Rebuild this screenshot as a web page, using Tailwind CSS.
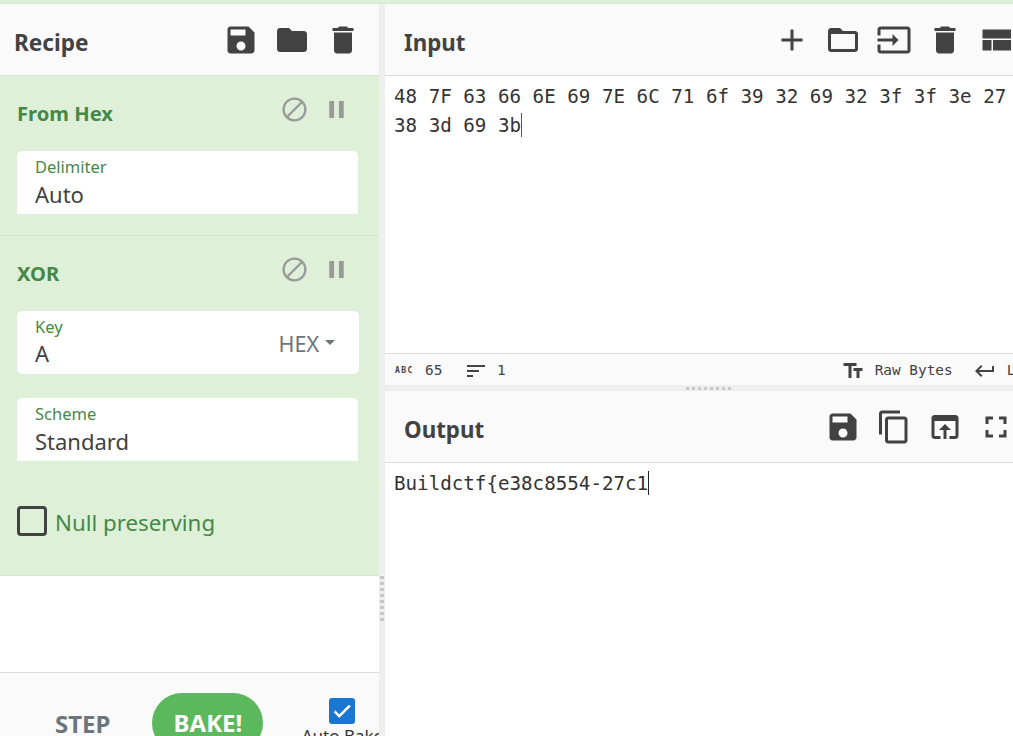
<!DOCTYPE html>
<html lang="en">
<head>
  <meta charset="UTF-8" />
  <title>CyberChef</title>
  <script src="https://cdn.jsdelivr.net/npm/@tailwindcss/browser@4"></script>
</head>
<body class="w-[1013px] h-[736px] overflow-hidden bg-white font-['Noto_Sans',sans-serif] text-[#424242]">

  <!-- top strip -->
  <div class="h-[4px] bg-[#dff0d8] border-b border-[#d8e6d2]"></div>

  <div class="flex h-[732px]">
    <!-- Recipe column -->
    <section class="w-[379px] flex-none flex flex-col overflow-hidden">
      <header class="h-[72px] flex-none flex items-center bg-[#fafafa] border-b border-[#dcdcdc] pl-[14px] pr-[11px]">
        <h2 class="text-[22.6px] font-bold leading-none mt-[8px]">Recipe</h2>
        <div class="ml-auto flex">
          <span class="w-[51px] h-[36px] flex justify-center"><svg class="w-[36px] h-[36px] fill-[#424242]" viewBox="0 0 24 24"><path d="M17 3H5c-1.11 0-2 .9-2 2v14c0 1.1.89 2 2 2h14c1.1 0 2-.9 2-2V7l-4-4zm-5 16c-1.66 0-3-1.34-3-3s1.34-3 3-3 3 1.34 3 3-1.34 3-3 3zm3-10H5V5h10v4z"/></svg></span>
          <span class="w-[51px] h-[36px] flex justify-center"><svg class="w-[36px] h-[36px] fill-[#424242]" viewBox="0 0 24 24"><path d="M10 4H4c-1.1 0-1.99.9-1.99 2L2 18c0 1.1.9 2 2 2h16c1.1 0 2-.9 2-2V8c0-1.1-.9-2-2-2h-8l-2-2z"/></svg></span>
          <span class="w-[51px] h-[36px] flex justify-center"><svg class="w-[36px] h-[36px] fill-[#424242]" viewBox="0 0 24 24"><path d="M6 19c0 1.1.9 2 2 2h8c1.1 0 2-.9 2-2V7H6v12zM19 4h-3.5l-1-1h-5l-1 1H5v2h14V4z"/></svg></span>
        </div>
      </header>

      <!-- From Hex -->
      <div class="h-[160px] flex-none bg-[#dff0d8] border-b border-[#d3e6cb] px-[17px] pt-[19px]">
        <div class="flex items-start h-[56px]">
          <h3 class="text-[20.2px] font-bold leading-none text-[#468847] mt-[8px]">From Hex</h3>
          <div class="ml-auto flex mr-[4px]">
            <svg class="w-[29px] h-[29px] fill-[#9a9a9a]" viewBox="0 0 24 24"><path d="M12 2C6.48 2 2 6.48 2 12s4.48 10 10 10 10-4.48 10-10S17.52 2 12 2zM4 12c0-4.42 3.58-8 8-8 1.85 0 3.55.63 4.9 1.69L5.69 16.9C4.63 15.55 4 13.85 4 12zm8 8c-1.85 0-3.55-.63-4.9-1.69L18.31 7.1C19.37 8.45 20 10.15 20 12c0 4.42-3.58 8-8 8z"/></svg>
            <svg class="w-[29px] h-[29px] fill-[#9a9a9a] ml-[13px] mr-[7px]" viewBox="0 0 24 24"><path d="M6 19h4V5H6v14zm8-14v14h4V5h-4z"/></svg>
          </div>
        </div>
        <div class="w-[341px] h-[63px] bg-white rounded-t-[5px] pl-[18px] pt-[5px]">
          <div class="text-[16.5px] leading-[22px] text-[#468847]">Delimiter</div>
          <div class="text-[22px] leading-[30px] mt-[1px]">Auto</div>
        </div>
      </div>

      <!-- XOR -->
      <div class="h-[340px] flex-none bg-[#dff0d8] border-b border-[#d3e6cb] px-[17px] pt-[19px]">
        <div class="flex items-start h-[56px]">
          <h3 class="text-[20.2px] font-bold leading-none text-[#468847] mt-[8px]">XOR</h3>
          <div class="ml-auto flex mr-[4px]">
            <svg class="w-[29px] h-[29px] fill-[#9a9a9a]" viewBox="0 0 24 24"><path d="M12 2C6.48 2 2 6.48 2 12s4.48 10 10 10 10-4.48 10-10S17.52 2 12 2zM4 12c0-4.42 3.58-8 8-8 1.85 0 3.55.63 4.9 1.69L5.69 16.9C4.63 15.55 4 13.85 4 12zm8 8c-1.85 0-3.55-.63-4.9-1.69L18.31 7.1C19.37 8.45 20 10.15 20 12c0 4.42-3.58 8-8 8z"/></svg>
            <svg class="w-[29px] h-[29px] fill-[#9a9a9a] ml-[13px] mr-[7px]" viewBox="0 0 24 24"><path d="M6 19h4V5H6v14zm8-14v14h4V5h-4z"/></svg>
          </div>
        </div>
        <div class="w-[342px] h-[63px] bg-white rounded-[5px] pl-[18px] pt-[5px] flex">
          <div>
            <div class="text-[16.5px] leading-[22px] text-[#468847]">Key</div>
            <div class="text-[22px] leading-[30px]">A</div>
          </div>
          <div class="ml-auto mr-[24px] flex items-center h-[56px] text-[21.5px] text-[#6c757d]">
            HEX
            <span class="ml-[6px] mb-[4px] border-x-[5.5px] border-t-[5.5px] border-x-transparent border-t-[#6c757d]"></span>
          </div>
        </div>
        <div class="w-[341px] h-[63px] bg-white rounded-t-[5px] pl-[18px] pt-[5px] mt-[24px]">
          <div class="text-[16.5px] leading-[22px] text-[#468847]">Scheme</div>
          <div class="text-[22px] leading-[30px] mt-[1px]">Standard</div>
        </div>
        <div class="flex items-center mt-[43px]">
          <span class="w-[30px] h-[30px] border-[3px] border-[#424242] rounded-[4px]"></span>
          <span class="ml-[8px] text-[22.3px] leading-[30px] mt-[4px] text-[#468847]">Null preserving</span>
        </div>
      </div>

      <div class="flex-1 bg-white"></div>

      <!-- Controls -->
      <footer class="h-[64px] flex-none bg-[#fafafa] border-t border-[#dcdcdc] relative overflow-hidden flex items-start">
        <span class="ml-[55px] mt-[36px] text-[24px] font-bold leading-[30px] text-[#6c757d]">STEP</span>
        <span class="ml-[42px] mt-[20px] w-[111px] h-[60px] flex-none rounded-full bg-[#5cb85c] text-white text-[24px] font-bold text-center leading-[30px] pt-[15px]">BAKE!</span>
        <div class="ml-[41px] mt-[25px] w-[76px] flex-none flex flex-col items-center">
          <span class="w-[26px] h-[26px] rounded-[3px] bg-[#1976d2] flex items-center justify-center">
            <svg class="w-[22px] h-[22px] fill-white stroke-white stroke-1" viewBox="0 0 24 24"><path d="M9 16.17 4.83 12l-1.42 1.41L9 19 21 7l-1.41-1.41z"/></svg>
          </span>
          <span class="text-[17px] leading-[24px] whitespace-nowrap text-[#333]">Auto Bake</span>
        </div>
      </footer>
    </section>

    <!-- vertical gutter -->
    <div class="w-[6px] flex-none bg-[#eeeeee] flex flex-col items-center pt-[572px]">
      <div class="w-[4px] h-[46px] bg-[repeating-linear-gradient(to_bottom,#c8c8c8_0,#c8c8c8_3px,transparent_3px,transparent_6px)]"></div>
    </div>

    <!-- Input / Output -->
    <main class="w-[628px] flex-none flex flex-col overflow-hidden">
      <header class="h-[72px] w-[637px] flex-none flex items-center bg-[#fafafa] border-b border-[#dcdcdc] pl-[19px] pr-[1px]">
        <h2 class="text-[22.3px] font-bold leading-none mt-[8px]">Input</h2>
        <div class="ml-auto flex">
          <span class="w-[51px] h-[36px] flex justify-center"><svg class="w-[36px] h-[36px] fill-[#424242]" viewBox="0 0 24 24"><path d="M19 13h-6v6h-2v-6H5v-2h6V5h2v6h6v2z"/></svg></span>
          <span class="w-[51px] h-[36px] flex justify-center"><svg class="w-[36px] h-[36px] fill-[#424242]" viewBox="0 0 24 24"><path d="M20 6h-8l-2-2H4c-1.1 0-1.99.9-1.99 2L2 18c0 1.1.9 2 2 2h16c1.1 0 2-.9 2-2V8c0-1.1-.9-2-2-2zm0 12H4V8h16v10z"/></svg></span>
          <span class="w-[51px] h-[36px] flex justify-center"><svg class="w-[36px] h-[36px] fill-[#424242]" viewBox="0 0 24 24"><path d="M21 3.01H3c-1.1 0-2 .9-2 2V9h2V4.99h18v14.03H3V15H1v4.01c0 1.1.9 1.98 2 1.98h18c1.1 0 2-.88 2-1.98v-14c0-1.11-.9-2-2-2zM11 16l4-4-4-4v3H1v2h10v3z"/></svg></span>
          <span class="w-[51px] h-[36px] flex justify-center"><svg class="w-[36px] h-[36px] fill-[#424242]" viewBox="0 0 24 24"><path d="M6 19c0 1.1.9 2 2 2h8c1.1 0 2-.9 2-2V7H6v12zM19 4h-3.5l-1-1h-5l-1 1H5v2h14V4z"/></svg></span>
          <span class="w-[51px] h-[36px] flex justify-center"><svg class="w-[36px] h-[36px] fill-[#424242]" viewBox="0 0 24 24"><path d="M3 19h6v-7H3v7zm7 0h12v-7H10v7zM3 5v6h19V5H3z"/></svg></span>
        </div>
      </header>

      <div class="h-[277px] flex-none bg-white pl-[9px] pt-[6px] font-['DejaVu_Sans_Mono',monospace] text-[19.2px] leading-[29px] text-[#333] whitespace-pre">48 7F 63 66 6E 69 7E 6C 71 6f 39 32 69 32 3f 3f 3e 27
38 3d 69 3b<span class="inline-block w-px h-[24px] bg-[#555] align-[-5px]"></span></div>

      <!-- status bar -->
      <div class="h-[32px] flex-none flex items-center bg-[#fafafa] border-t border-[#dcdcdc] pl-[10px] pt-[2px] font-['DejaVu_Sans_Mono',monospace] text-[14.4px] text-[#424242] whitespace-nowrap">
        <span class="w-[30px] flex-none text-[8px] font-bold tracking-[1.4px]">ABC</span>
        <span class="w-[42px] flex-none">65</span>
        <svg class="w-[24px] h-[24px] flex-none fill-[#424242] ml-[-3px] mr-[9px]" viewBox="0 0 24 24"><path d="M3 18h6v-2H3v2zM3 6v2h18V6H3zm0 7h12v-2H3v2z"/></svg>
        <span class="flex-none">1</span>
        <svg class="w-[24px] h-[24px] flex-none fill-[#424242] ml-[335px]" viewBox="0 0 24 24"><path d="M2.5 4v3h5v12h3V7h5V4h-13zm19 5h-9v3h3v7h3v-7h3V9z"/></svg>
        <span class="flex-none ml-[10px]">Raw Bytes</span>
        <svg class="w-[24px] h-[24px] flex-none fill-[#424242] ml-[20px]" viewBox="0 0 24 24"><path d="M19 7v4H5.83l3.58-3.59L8 6l-6 6 6 6 1.41-1.41L5.83 13H21V7z"/></svg>
        <span class="flex-none ml-[10px]">LF</span>
      </div>

      <!-- horizontal gutter -->
      <div class="h-[6px] flex-none bg-[#eeeeee] pl-[301px] pt-[2px]">
        <div class="w-[46px] h-[3px] bg-[repeating-linear-gradient(to_right,#c8c8c8_0,#c8c8c8_3px,transparent_3px,transparent_6px)]"></div>
      </div>

      <header class="h-[72px] w-[637px] flex-none flex items-center bg-[#fafafa] border-b border-[#dcdcdc] pl-[19px] pr-[1px]">
        <h2 class="text-[22.3px] font-bold leading-none mt-[8px]">Output</h2>
        <div class="ml-auto flex">
          <span class="w-[51px] h-[36px] flex justify-center"><svg class="w-[36px] h-[36px] fill-[#424242]" viewBox="0 0 24 24"><path d="M17 3H5c-1.11 0-2 .9-2 2v14c0 1.1.89 2 2 2h14c1.1 0 2-.9 2-2V7l-4-4zm-5 16c-1.66 0-3-1.34-3-3s1.34-3 3-3 3 1.34 3 3-1.34 3-3 3zm3-10H5V5h10v4z"/></svg></span>
          <span class="w-[51px] h-[36px] flex justify-center"><svg class="w-[36px] h-[36px] fill-[#424242]" viewBox="0 0 24 24"><path d="M16 1H4c-1.1 0-2 .9-2 2v14h2V3h12V1zm3 4H8c-1.1 0-2 .9-2 2v14c0 1.1.9 2 2 2h11c1.1 0 2-.9 2-2V7c0-1.1-.9-2-2-2zm0 16H8V7h11v14z"/></svg></span>
          <span class="w-[51px] h-[36px] flex justify-center"><svg class="w-[36px] h-[36px] fill-[#424242]" viewBox="0 0 24 24"><path d="M19 4H5c-1.11 0-2 .9-2 2v12c0 1.1.89 2 2 2h4v-2H5V8h14v10h-4v2h4c1.1 0 2-.9 2-2V6c0-1.1-.89-2-2-2zm-7 6l-4 4h3v6h2v-6h3l-4-4z"/></svg></span>
          <span class="w-[51px] h-[36px] flex justify-center"><svg class="w-[36px] h-[36px] fill-[#424242]" viewBox="0 0 24 24"><path d="M7 14H5v5h5v-2H7v-3zm-2-4h2V7h3V5H5v5zm12 7h-3v2h5v-5h-2v3zM14 5v2h3v3h2V5h-5z"/></svg></span>
        </div>
      </header>

      <div class="flex-1 bg-white pl-[9px] pt-[6px] font-['DejaVu_Sans_Mono',monospace] text-[19.2px] leading-[29px] text-[#333] whitespace-pre">Buildctf{e38c8554-27c1<span class="inline-block w-px h-[24px] bg-[#222] align-[-5px]"></span></div>
    </main>
  </div>
</body>
</html>
